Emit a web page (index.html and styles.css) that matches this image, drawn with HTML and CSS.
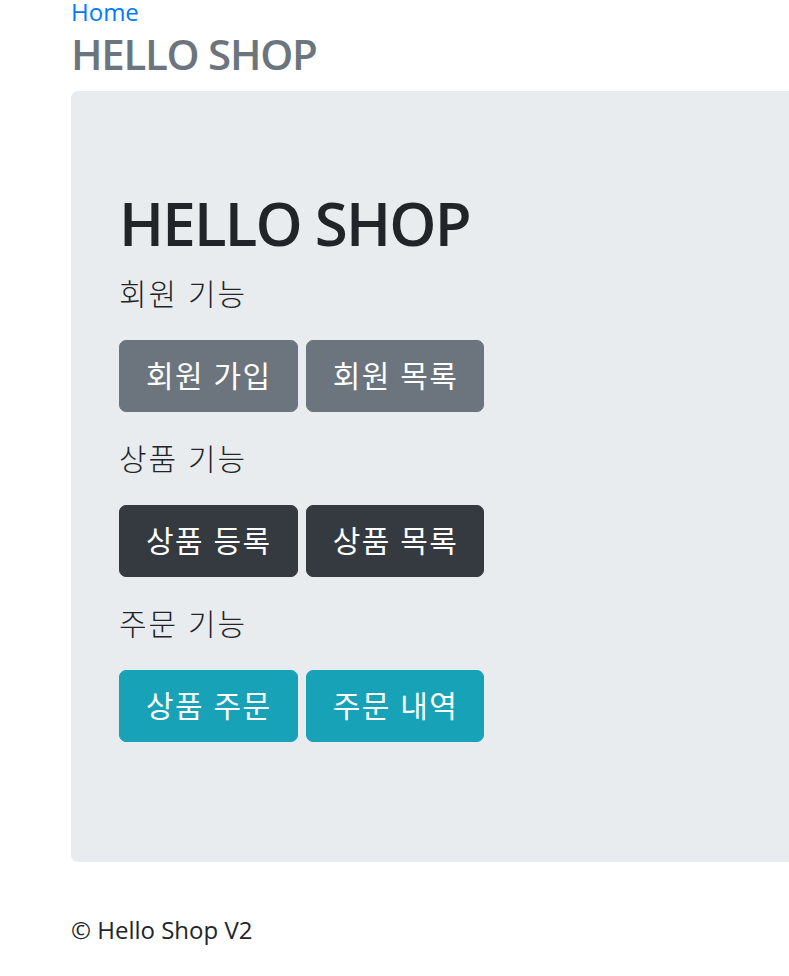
FILE: index.html
```html
<!DOCTYPE html>
<html lang="ko">
<head>
<meta charset="utf-8">
<title>HELLO SHOP</title>
<link rel="stylesheet" href="styles.css">
</head>
<body>
<div class="container">
  <div class="header">
    <ul class="nav">
      <li><a class="nav-link" href="#">Home</a></li>
    </ul>
    <h3 class="brand">HELLO SHOP</h3>
  </div>
  <div class="jumbotron">
    <h1 class="title">HELLO SHOP</h1>
    <p class="lead">회원 기능</p>
    <p class="btn-row">
      <a class="btn btn-secondary" href="#">회원 가입</a>
      <a class="btn btn-secondary" href="#">회원 목록</a>
    </p>
    <p class="lead">상품 기능</p>
    <p class="btn-row">
      <a class="btn btn-dark" href="#">상품 등록</a>
      <a class="btn btn-dark" href="#">상품 목록</a>
    </p>
    <p class="lead">주문 기능</p>
    <p class="btn-row">
      <a class="btn btn-info" href="#">상품 주문</a>
      <a class="btn btn-info" href="#">주문 내역</a>
    </p>
  </div>
  <div class="footer">
    <p>© Hello Shop V2</p>
  </div>
</div>
</body>
</html>
```
FILE: styles.css
```css
* { box-sizing: border-box; }
html, body { margin: 0; padding: 0; }
body {
  font-family: "Open Sans", "Noto Sans CJK KR", sans-serif;
  font-size: 24px;
  line-height: 1.5;
  color: #212529;
  background: #fff;
  overflow: hidden;
}
.container {
  padding-left: 71px;
  width: 1072px;
}
.header {
  margin-top: -6px;
}
.nav {
  list-style: none;
  margin: 0;
  padding: 0;
  display: flex;
}
.nav-link {
  color: #007bff;
  text-decoration: none;
}
.brand {
  margin: -1px 0 12px;
  font-size: 42px;
  line-height: 1.2;
  font-weight: 600;
  color: #6c757d;
  letter-spacing: -0.03em;
}
.jumbotron {
  background: #e9ecef;
  border-radius: 7px;
  padding: 96px 48px;
  margin-bottom: 48px;
  width: 930px;
}
.title {
  margin: 0 0 12px;
  font-size: 60px;
  line-height: 1.2;
  font-weight: 600;
  letter-spacing: -0.03em;
}
.lead {
  margin: 0 0 24px;
  font-size: 30px;
  font-weight: 300;
  line-height: 1.5;
  letter-spacing: 2px;
}
.btn-row {
  margin: 0 0 24px;
  display: flex;
  gap: 8px;
}
.btn {
  display: inline-block;
  font-size: 30px;
  line-height: 46px;
  padding: 12px 25px 12px 26px;
  border: 1px solid transparent;
  border-radius: 7px;
  color: #fff;
  text-decoration: none;
  font-weight: 400;
  white-space: nowrap;
  letter-spacing: 1.5px;
}
.btn-secondary { background: #6c757d; border-color: #6c757d; }
.btn-dark { background: #343a40; border-color: #343a40; }
.btn-info { background: #17a2b8; border-color: #17a2b8; }
.footer {
  padding-top: 2px;
}
.footer p {
  margin: 0;
  font-size: 24px;
}
```
